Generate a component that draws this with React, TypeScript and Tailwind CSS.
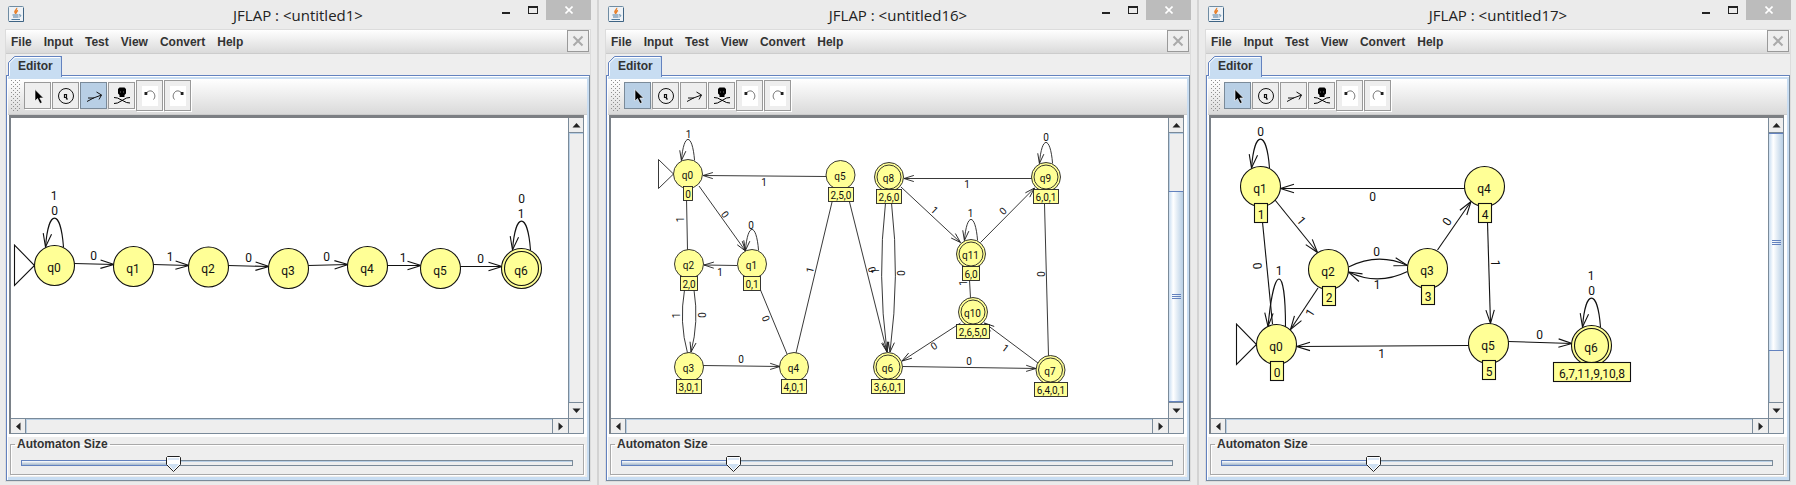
import { useState, type ReactNode } from 'react';

type Point = [number, number];

type StateNode = {
  name: string;
  x: number;
  y: number;
  final?: boolean;
  tag?: string;
  tagWidth?: number;
};

type Edge = { path: string; tip?: Point; angle?: number };

type Label = { text: string; x: number; y: number; rotate?: number };

type Diagram = {
  scale: number;
  start: Point[];
  nodes: StateNode[];
  edges: Edge[];
  labels: Label[];
};

type WindowData = {
  id: string;
  title: string;
  tool: number;
  size: number;
  thumb?: { top: number; height: number };
  diagram: Diagram;
};

const line = (x1: number, y1: number, x2: number, y2: number, arrow = true): Edge => ({
  path: `M${x1} ${y1}L${x2} ${y2}`,
  tip: arrow ? [x2, y2] : undefined,
  angle: (Math.atan2(y2 - y1, x2 - x1) * 180) / Math.PI,
});

const loop = (x: number, y: number, k = 1): Edge => ({
  path: `M${x + 9 * k} ${y - 18.5 * k}C${x + 6 * k} ${y - 57 * k} ${x - 6 * k} ${y - 57 * k} ${x - 9 * k} ${y - 18.5 * k}`,
  tip: [x - 9 * k, y - 18.5 * k],
  angle: 98,
});

const first: Diagram = {
  scale: 1,
  start: [[14.5, 245], [14.5, 285.5], [34.5, 265.5]],
  nodes: [
    { name: 'q0', x: 54.5, y: 265.5 },
    { name: 'q1', x: 133.5, y: 266.5 },
    { name: 'q2', x: 208.5, y: 267 },
    { name: 'q3', x: 288.5, y: 268.5 },
    { name: 'q4', x: 367.5, y: 266.5 },
    { name: 'q5', x: 440.5, y: 268.5 },
    { name: 'q6', x: 521.5, y: 268.5, final: true },
  ],
  edges: [
    loop(54.5, 265.5),
    line(74, 263.5, 114, 264.5),
    line(153, 264.5, 189, 265.5),
    line(228, 265.5, 269, 266.5),
    line(308, 265.5, 348, 264.5),
    line(387, 265.5, 421, 265.5),
    line(460, 266.5, 502, 266.5),
    loop(521.5, 268.5),
  ],
  labels: [
    { text: '1', x: 54, y: 195.5 },
    { text: '0', x: 54.5, y: 210.5 },
    { text: '0', x: 93.5, y: 256 },
    { text: '1', x: 170, y: 256.5 },
    { text: '0', x: 248.5, y: 258 },
    { text: '0', x: 326.5, y: 256.5 },
    { text: '1', x: 403, y: 258 },
    { text: '0', x: 480.5, y: 258.5 },
    { text: '0', x: 521.5, y: 198.5 },
    { text: '1', x: 521, y: 213.5 },
  ],
};

const second: Diagram = {
  scale: 0.73,
  start: [[58.5, 159.5], [58.5, 188.5], [73.5, 174]],
  nodes: [
    { name: 'q0', x: 88, y: 174, tag: '0', tagWidth: 9 },
    { name: 'q5', x: 240.5, y: 175, tag: '2,5,0', tagWidth: 25 },
    { name: 'q2', x: 89, y: 264, tag: '2,0', tagWidth: 17 },
    { name: 'q1', x: 152, y: 264, tag: '0,1', tagWidth: 17 },
    { name: 'q3', x: 89, y: 367, tag: '3,0,1', tagWidth: 25 },
    { name: 'q4', x: 194, y: 367, tag: '4,0,1', tagWidth: 25 },
    { name: 'q8', x: 289, y: 177, final: true, tag: '2,6,0', tagWidth: 25 },
    { name: 'q9', x: 446, y: 177, final: true, tag: '6,0,1', tagWidth: 25 },
    { name: 'q11', x: 371, y: 254, final: true, tag: '6,0', tagWidth: 17 },
    { name: 'q10', x: 373, y: 312, final: true, tag: '2,6,5,0', tagWidth: 33 },
    { name: 'q6', x: 288, y: 367, final: true, tag: '3,6,0,1', tagWidth: 33 },
    { name: 'q7', x: 450.5, y: 370, final: true, tag: '6,4,0,1', tagWidth: 33 },
  ],
  edges: [
    loop(88, 174, 0.73),
    line(226, 176.5, 103, 175.5),
    line(99, 186, 145.5, 251),
    line(86.5, 198, 87.5, 250, false),
    line(137, 265.5, 104, 265),
    loop(152, 264, 0.73),
    { path: 'M84.5 290Q79 322 87.5 353' },
    { path: 'M94 290Q99 322 91 352', tip: [91, 352], angle: 102 },
    line(103, 365.5, 180, 366.5),
    line(160.5, 290, 187, 354, false),
    line(196, 353, 232.5, 200, false),
    line(249, 200, 287, 352),
    { path: 'M285.5 203Q277 275 287 352', tip: [287, 352], angle: 83 },
    { path: 'M291.5 203Q300 275 290 352', tip: [290, 352], angle: 98 },
    line(432, 178.5, 304, 178.5),
    line(301, 187, 360.5, 242.5),
    line(380.5, 242.5, 434.5, 188),
    loop(371, 254, 0.73),
    loop(446, 177, 0.73),
    line(369.5, 280, 370.5, 298, false),
    line(444.5, 204, 448.5, 356, false),
    line(360.5, 323, 302, 361),
    line(438, 363, 384.5, 323),
    line(303, 366.5, 436, 368.5),
  ],
  labels: [
    { text: '1', x: 88.5, y: 134.5 },
    { text: '1', x: 164, y: 182 },
    { text: '0', x: 125, y: 214.5, rotate: 54 },
    { text: '1', x: 80.5, y: 219.5, rotate: -90 },
    { text: '0', x: 151, y: 225 },
    { text: '1', x: 120, y: 272 },
    { text: '1', x: 76, y: 315.5, rotate: -90 },
    { text: '0', x: 101.5, y: 315, rotate: 90 },
    { text: '0', x: 141, y: 359.5 },
    { text: '0', x: 166, y: 318.5, rotate: 68 },
    { text: '1', x: 210, y: 270, rotate: -76 },
    { text: '0', x: 272, y: 269.5, rotate: 76 },
    { text: '1', x: 275.5, y: 271, rotate: -90 },
    { text: '0', x: 301, y: 273, rotate: 90 },
    { text: '1', x: 367, y: 184.5 },
    { text: '1', x: 334.5, y: 210, rotate: 43 },
    { text: '0', x: 403, y: 211, rotate: -45 },
    { text: '1', x: 370.5, y: 213.5 },
    { text: '0', x: 446, y: 137.5 },
    { text: '1', x: 363.5, y: 283, rotate: -90 },
    { text: '0', x: 440.5, y: 274, rotate: 90 },
    { text: '0', x: 334, y: 346, rotate: -33 },
    { text: '1', x: 405.5, y: 348, rotate: 37 },
    { text: '0', x: 369, y: 361.5 },
  ],
};

const third: Diagram = {
  scale: 1,
  start: [[36.5, 324], [36.5, 364.5], [56.5, 344.5]],
  nodes: [
    { name: 'q1', x: 60.5, y: 186.5, tag: '1', tagWidth: 13 },
    { name: 'q4', x: 284.5, y: 186.5, tag: '4', tagWidth: 13 },
    { name: 'q2', x: 128.5, y: 269.5, tag: '2', tagWidth: 13 },
    { name: 'q3', x: 227.5, y: 268.5, tag: '3', tagWidth: 13 },
    { name: 'q0', x: 76.5, y: 344.5, tag: '0', tagWidth: 13 },
    { name: 'q5', x: 288.5, y: 343.5, tag: '5', tagWidth: 13 },
    { name: 'q6', x: 391.5, y: 345.5, final: true, tag: '6,7,11,9,10,8', tagWidth: 77 },
  ],
  edges: [
    loop(60.5, 186.5),
    line(265, 188.5, 80.5, 188.5),
    line(75, 200, 117.5, 252.5),
    line(62.5, 222, 72.5, 324, false),
    { path: 'M85.5 327C85.5 263 74 263 68 326.5', tip: [68, 326.5], angle: 94 },
    { path: 'M148.5 267Q178 252 207.5 265.5', tip: [207.5, 265.5], angle: 16 },
    { path: 'M207.5 271.5Q178 286 148.5 272', tip: [148.5, 272], angle: 205 },
    line(237.5, 250, 271, 201.5),
    line(118, 288, 90.5, 329.5),
    line(287.5, 222, 290.5, 323.5),
    line(268.5, 345.5, 96.5, 346.5),
    line(308, 341.5, 372, 343.5),
    loop(391.5, 345.5),
  ],
  labels: [
    { text: '0', x: 60.5, y: 131.5 },
    { text: '0', x: 172.5, y: 196.5 },
    { text: '1', x: 101.5, y: 220.5, rotate: 50 },
    { text: '0', x: 57.5, y: 266, rotate: 84 },
    { text: '1', x: 79, y: 270.5 },
    { text: '0', x: 176.5, y: 251.5 },
    { text: '1', x: 177, y: 284.5 },
    { text: '0', x: 247, y: 221.5, rotate: -55 },
    { text: '1', x: 110, y: 312.5, rotate: -57 },
    { text: '1', x: 295.5, y: 263, rotate: 90 },
    { text: '1', x: 181.5, y: 353.5 },
    { text: '0', x: 339.5, y: 334.5 },
    { text: '1', x: 391, y: 275.5 },
    { text: '0', x: 391.5, y: 290.5 },
  ],
};

const windows: WindowData[] = [
  { id: 'w1', title: 'JFLAP : <untitled1>', tool: 2, size: 276, diagram: first },
  { id: 'w2', title: 'JFLAP : <untitled16>', tool: 0, size: 202, thumb: { top: 58, height: 211 }, diagram: second },
  { id: 'w3', title: 'JFLAP : <untitled17>', tool: 0, size: 276, thumb: { top: 0, height: 218 }, diagram: third },
];

function AutomatonView({ diagram }: { diagram: Diagram }) {
  const k = diagram.scale;
  const font = k === 1 ? 12 : 10;
  const radius = k === 1 ? 20 : 14.5;
  const inner = k === 1 ? 17 : 12;
  const tagTop = k === 1 ? 17 : 12.5;
  const tagHeight = k === 1 ? 19 : 14;
  const textDrop = k === 1 ? 5 : 4;
  const stroke = k === 1 ? '#111111' : '#222222';
  return (
    <svg
      className="block h-[300px] w-full font-[Roboto,sans-serif]"
      fontSize={font}
      role="img"
      aria-label="Automaton"
    >
      <g transform="translate(-11 -118)" fill="none" stroke={stroke} strokeWidth={k === 1 ? 1.1 : 0.9}>
        {diagram.edges.map((e, i) => (
          <g key={i}>
            <path d={e.path} />
            {e.tip && (
              <path
                d={`M${-13.5 * k} ${-4.2 * k}L0 0L${-13.5 * k} ${4.2 * k}`}
                transform={`translate(${e.tip[0]} ${e.tip[1]}) rotate(${e.angle})`}
              />
            )}
          </g>
        ))}
        <polygon points={diagram.start.map((p) => p.join(',')).join(' ')} fill="#fff" />
        {diagram.nodes.map((n) => {
          const left = Math.floor(n.x - (n.tagWidth ?? 0) / 2) + 0.5;
          const top = Math.round(n.y + tagTop);
          return (
            <g key={n.name}>
              <circle cx={n.x} cy={n.y} r={radius} fill="#ffff96" />
              {n.final && <circle cx={n.x} cy={n.y} r={inner} />}
              <text x={n.x - 0.5} y={n.y + textDrop + 1} textAnchor="middle" fill="#111" stroke="none">
                {n.name}
              </text>
              {n.tag && n.tagWidth && (
                <>
                  <rect x={left} y={top - 0.5} width={n.tagWidth} height={tagHeight} fill="#ffff96" />
                  <text
                    x={left + n.tagWidth / 2}
                    y={top + tagHeight - (k === 1 ? 4 : 3)}
                    textAnchor="middle"
                    fill="#111"
                    stroke="none"
                  >
                    {n.tag}
                  </text>
                </>
              )}
            </g>
          );
        })}
        {diagram.labels.map((l, i) => (
          <text
            key={i}
            transform={`translate(${l.x} ${l.y}) rotate(${l.rotate ?? 0})`}
            dy={font * 0.36}
            textAnchor="middle"
            fill="#111"
            stroke="none"
          >
            {l.text}
          </text>
        ))}
      </g>
    </svg>
  );
}

function JavaIcon() {
  return (
    <svg width="16" height="16" viewBox="0 0 16 16" fill="none">
      <rect x="0.5" y="0.5" width="15" height="15" rx="1" fill="#eef2f6" stroke="#6f8ca3" />
      <path d="M1 15.5h14.500V2" stroke="#3f6484" />
      <path d="M8.500 2c1 1.500-2.500 2.500-1.500 4.500.3.600.8.900.8 1.500M10 4.500c-1.800.8-2 1.600-1.200 2.500" stroke="#e8822e" strokeWidth="1.500" />
      <path d="M4.500 9h6M5 11h5.500M3.500 13.500h8.500M11 9c2-.8 2.500 1.200.5 2" stroke="#4f7b9f" />
    </svg>
  );
}

function CursorIcon() {
  return (
    <svg width="25" height="25" viewBox="0 0 25 25">
      <path d="M10 6.500v11.500l2.500-2.500 2.500 5 2.200-1-2.400-4.500h3.700z" fill="#000" stroke="#fff" strokeWidth="0.600" />
    </svg>
  );
}

function StateIcon() {
  return (
    <svg width="25" height="25" viewBox="0 0 25 25" fill="none" stroke="#111">
      <circle cx="13" cy="13" r="7.500" />
      <path d="M13.500 11.500h-2v3h2M13.500 11v5h1.500" strokeWidth="1.200" />
    </svg>
  );
}

function TransitionIcon() {
  return (
    <svg width="25" height="25" viewBox="0 0 25 25" fill="none" stroke="#111">
      <path d="M6 18.500l6.500-3.500 8-3M7 15h6M15.500 9l5 3-2.500 4.500" />
    </svg>
  );
}

function SkullIcon() {
  return (
    <svg width="25" height="25" viewBox="0 0 25 25">
      <path d="M10.500 4.500h5l1.500 1.500v4.500L15.500 12v2h-5v-2L9 10.500V6z" fill="#000" />
      <path d="M11 8.500h1v1h-1zM14 8.500h1v1h-1z" fill="#777" />
      <path d="M5 14.500l3.500 .5 9 4.500 3.500 .5M5 20.500l3.500-.5 9-5 3.500-.5" fill="none" stroke="#000" />
    </svg>
  );
}

function HistoryIcon({ redo = false }: { redo?: boolean }) {
  return (
    <span className="flex h-5 w-4 items-center justify-center bg-white">
      <svg width="16" height="20" viewBox="0 0 16 20" fill="none">
        <g transform={redo ? 'translate(16 0) scale(-1 1)' : undefined}>
          <path d="M4 7.500C6 4.500 9.500 4 11.500 6.500S13 12 11.500 13.500" stroke="#666" />
          <path d="M2.500 6h2.800v3H2.500z" fill="#222" />
        </g>
      </svg>
    </span>
  );
}

const tools: { name: string; icon: ReactNode }[] = [
  { name: 'Attribute Editor', icon: <CursorIcon /> },
  { name: 'State Creator', icon: <StateIcon /> },
  { name: 'Transition Creator', icon: <TransitionIcon /> },
  { name: 'Deleter', icon: <SkullIcon /> },
];

function Grip() {
  const rows = Array.from({ length: 16 }, (_, i) => i);
  return (
    <svg width="10" height="32" viewBox="0 0 10 32" fill="#8f8f8f">
      {rows.flatMap((r) =>
        [0, 4, 8].map((c) => <rect key={`${r}-${c}`} x={c + (r % 2 ? 2 : 0)} y={r * 2} width="1" height="1" />),
      )}
    </svg>
  );
}

function ArrowButton({ points, name, className }: { points: string; name: string; className: string }) {
  return (
    <button
      type="button"
      aria-label={name}
      className={`flex shrink-0 items-center justify-center border-[#7a8a99] bg-[#eeeeee] ${className}`}
    >
      <svg width="9" height="9" viewBox="0 0 9 9">
        <polygon points={points} fill="#222" />
      </svg>
    </button>
  );
}

function SizeSlider({ id, initial }: { id: string; initial: number }) {
  const [value, setValue] = useState(initial);
  const left = `${value / 10}%`;
  return (
    <div className="relative mx-[10px] flex h-[22px] items-center">
      <div className="flex h-[6px] w-full border border-[#7a8a99] bg-[#eeeeee] shadow-[inset_0_1px_0_#b8cfe5]">
        <div
          className="-my-px -ml-px border border-[#6382bf] bg-linear-to-b from-white to-[#a3b8cc]"
          style={{ width: left }}
        />
      </div>
      <svg
        className="absolute top-1 -ml-[7px]"
        style={{ left }}
        width="15"
        height="16"
        viewBox="0 0 15 16"
        aria-hidden="true"
      >
        <path d="M1.500 .5h12l1 1V8.500l-7 7-7-7V1.500z" fill="#ffffff" stroke="#222" />
        <path d="M2 8h11l-5.500 6z" fill="#cfe0f2" />
        <path d="M2 2h11v2H2z" fill="#dbe7f5" />
      </svg>
      <input
        id={id}
        type="range"
        min={0}
        max={1000}
        value={value}
        onChange={(e) => setValue(Number(e.target.value))}
        className="absolute inset-0 m-0 h-full w-full opacity-0"
      />
    </div>
  );
}

function TitleBar({ title }: { title: string }) {
  return (
    <header className="grid h-[29px] grid-cols-[100px_1fr_100px] items-start">
      <div className="pt-[6px] pl-[3px]">
        <JavaIcon />
      </div>
      <h1 className="pt-1 text-center font-['Open_Sans',sans-serif] text-[15px] leading-[22px] text-[#222]">{title}</h1>
      <div className="flex justify-end">
        <button type="button" aria-label="Minimize" className="flex h-5 w-7 justify-center pt-3">
          <span className="h-[2px] w-2 bg-[#222]" />
        </button>
        <button type="button" aria-label="Maximize" className="flex h-5 w-[26px] justify-center pt-[6px]">
          <span className="h-2 w-[10px] border border-t-2 border-[#222]" />
        </button>
        <button type="button" aria-label="Close" className="flex h-5 w-[45px] shrink-0 items-center justify-center bg-[#bcbcbc]">
          <svg width="8" height="8" viewBox="0 0 8 8" stroke="#fff" strokeWidth="1.600">
            <path d="M.5 .5l7 7M7.500 .5l-7 7" />
          </svg>
        </button>
      </div>
    </header>
  );
}

function MenuBar() {
  return (
    <nav className="flex h-6 items-start justify-between border-b border-[#cccccc] bg-linear-to-b from-white to-[#dadada] pr-px">
      <ul className="flex gap-3 pl-[5px] text-[12px] leading-[24px] font-bold">
        {['File', 'Input', 'Test', 'View', 'Convert', 'Help'].map((m) => (
          <li key={m}>
            <button type="button">{m}</button>
          </li>
        ))}
      </ul>
      <button
        type="button"
        aria-label="Close tab"
        className="flex size-[22px] items-center justify-center border border-[#999] bg-[#eeeeee]"
      >
        <svg width="12" height="12" viewBox="0 0 12 12" stroke="#aaa" strokeWidth="2">
          <path d="M1.500 1.500l9 9M10.500 1.500l-9 9" />
        </svg>
      </button>
    </nav>
  );
}

function EditorTab() {
  return (
    <div className="relative z-10 flex h-[21px] items-end pl-[2px]" role="tablist">
      <button
        type="button"
        role="tab"
        aria-selected="true"
        className="relative -mb-[2px] h-[21px] w-[54px] border-r border-[#6382bf] pl-[10px] text-left text-[12px] leading-[19px] font-bold"
      >
        <svg className="absolute inset-0 -z-10" width="54" height="21" viewBox="0 0 54 21" aria-hidden="true">
          <path d="M.5 21V6.500l6-6H54V21z" fill="#c8ddf2" stroke="none" />
          <path d="M.5 20V6.500l6-6H54" fill="none" stroke="#6382bf" />
          <path d="M1.500 20V7l5.500-5.500H52" fill="none" stroke="#fff" />
        </svg>
        Editor
      </button>
    </div>
  );
}

function Toolbar({ active }: { active: number }) {
  return (
    <div className="flex h-9 items-start border-b border-[#cccccc] bg-linear-to-b from-white to-[#dadada] pt-px pl-[3px]">
      <Grip />
      <div className="flex gap-px pt-[2px] pl-[3px]">
        {tools.map((t, i) => (
          <button
            key={t.name}
            type="button"
            aria-label={t.name}
            aria-pressed={i === active}
            className={`flex size-[27px] items-center justify-center border ${
              i === active ? 'border-[#7a8a99] bg-[#b8cfe5]' : 'border-[#999] bg-[#eeeeee] shadow-[1px_1px_0_#fff]'
            }`}
          >
            {t.icon}
          </button>
        ))}
      </div>
      <div className="flex gap-px pl-px">
        {['Undo', 'Redo'].map((n) => (
          <button
            key={n}
            type="button"
            aria-label={n}
            className="flex h-[31px] w-[27px] items-center justify-center border border-[#999] bg-[#eeeeee] shadow-[1px_1px_0_#fff]"
          >
            <HistoryIcon redo={n === 'Redo'} />
          </button>
        ))}
      </div>
    </div>
  );
}

function ScrollPane({ data }: { data: WindowData }) {
  return (
    <div className="bg-white pr-[3px] pb-[3px] pl-px">
      <div className="grid grid-cols-[minmax(0,1fr)_15px] border-t-[3px] border-l-2 border-t-[#7c7f83] border-l-[#7a8188]">
        <div className="border-r border-b border-[#7a8a99] bg-white">
          <AutomatonView diagram={data.diagram} />
        </div>
        <div className="flex flex-col border-r border-b border-[#7a8a99] bg-[#eeeeee]">
          <ArrowButton name="Scroll up" points="4.500,2 8.500,6.500 .5,6.500" className="h-[15px] border-b" />
          <div className="flex-1 border-t border-l border-[#b8cfe5]">
            {data.thumb && (
              <div
                className="-ml-px flex flex-col items-center justify-center gap-px border-y border-[#6382bf] bg-linear-to-r from-[#c8ddf2] via-white via-30% to-[#b8cfe5]"
                style={{ marginTop: data.thumb.top - 1, height: data.thumb.height }}
              >
                <span className="h-px w-[9px] bg-[#6382bf]" />
                <span className="h-px w-[9px] bg-[#6382bf]" />
                <span className="h-px w-[9px] bg-[#6382bf]" />
              </div>
            )}
          </div>
          <ArrowButton name="Scroll down" points=".5,2.500 8.500,2.500 4.500,7" className="h-4 border-t" />
        </div>
        <div className="flex h-[15px] border-r border-b border-[#7a8a99] bg-[#eeeeee]">
          <ArrowButton name="Scroll left" points="6.500,.5 6.500,8.500 2,4.500" className="w-[15px] border-r" />
          <div className="flex-1 border-t border-l border-[#b8cfe5]" />
          <ArrowButton name="Scroll right" points="2.500,.5 2.500,8.500 7,4.500" className="w-4 border-l" />
        </div>
        <div className="border-r border-b border-[#7a8a99] bg-[#eeeeee]" />
      </div>
    </div>
  );
}

function JflapWindow({ data }: { data: WindowData }) {
  return (
    <section className="mr-px border-r-2 border-[#d3d3d3] pr-[6px] pb-[5px] pl-[5px] last:mr-0 last:border-r-0 last:pr-[5px]">
      <TitleBar title={data.title} />
      <div className="border border-[#dcdcdc] bg-[#eeeeee] text-[#333]">
        <MenuBar />
        <EditorTab />
        <div className="border border-[#6382bf] border-r-[#7a8a99] border-b-[#7a8a99]">
          <div className="border-t border-l border-white">
            <div className="border-t-2 border-r-2 border-b-[3px] border-[#c8ddf2]">
              <Toolbar active={data.tool} />
              <ScrollPane data={data} />
              <fieldset className="mr-[3px] mb-[2px] ml-[2px] min-w-0 border border-[#a9a9a9] shadow-[1px_1px_0_#fff,inset_1px_1px_0_#fff]">
                <legend className="ml-1 px-[2px] text-[12px] leading-[15px] font-bold">
                  <label htmlFor={data.id}>Automaton Size</label>
                </legend>
                <SizeSlider id={data.id} initial={data.size} />
              </fieldset>
            </div>
          </div>
        </div>
      </div>
    </section>
  );
}

export default function App() {
  return (
    <main className="grid min-h-screen grid-cols-[150fr_150fr_149fr] bg-[#ebebeb] font-['Liberation_Sans',Arial,sans-serif]">
      {windows.map((w) => (
        <JflapWindow key={w.id} data={w} />
      ))}
    </main>
  );
}
